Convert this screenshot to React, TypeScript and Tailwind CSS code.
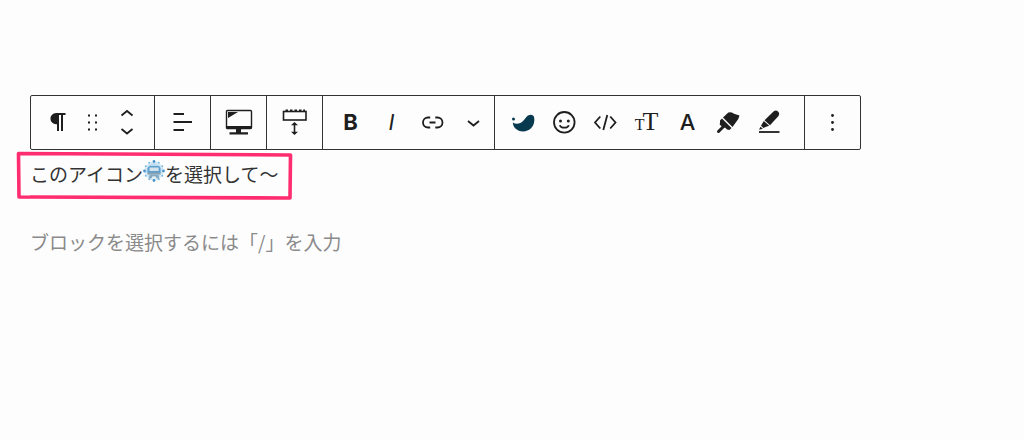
import type { ReactNode } from "react";

function Icon({ children, className = "" }: { children: ReactNode; className?: string }) {
  return (
    <svg
      className={`w-[29px] h-[29px] shrink-0 ${className}`}
      viewBox="0 0 29 29"
      fill="none"
      stroke="currentColor"
      strokeWidth={1.8}
      aria-hidden="true"
    >
      {children}
    </svg>
  );
}

function ToolButton({ label, children }: { label: string; children: ReactNode }) {
  return (
    <button type="button" aria-label={label} className="w-[41px] flex items-center justify-center">
      {children}
    </button>
  );
}

function SingleButton({ label, children }: { label: string; children: ReactNode }) {
  return (
    <button type="button" aria-label={label} className="w-14 last:w-[55px] flex items-center justify-center">
      {children}
    </button>
  );
}

const dots = [7.5, 14.5, 21.5];

// Beads around the emoji, every third one larger
const beads = Array.from({ length: 12 }, (_, i) => {
  const a = (i * Math.PI) / 6;
  return { x: 11 + 9.5 * Math.sin(a), y: 11 - 9.5 * Math.cos(a), big: i % 3 === 0 };
});

function InlineEmoji() {
  return (
    <svg className="w-[22px] h-[22px] inline-block align-baseline" viewBox="0 0 22 22" role="img" aria-label="アイコン">
      <circle cx="11" cy="11" r="8" fill="#bcdcf1" />
      <circle cx="11" cy="11" r="9" fill="none" stroke="#b5d8ef" strokeWidth="0.7" />
      {beads.map((b, i) => (
        <circle key={i} cx={b.x} cy={b.y} r={b.big ? 1.4 : 1} fill={b.big ? "#4a94cc" : "#7db8e0"} />
      ))}
      <path d="M4.5 8l2-2h9.500l1.500 2v5h-13z" fill="#5b9fcf" />
      <path d="M6.500 7.500h9.200v3.500H6.500z" fill="#d5e2e9" />
      <path d="M4.500 12.500h13v2h-13z" fill="#8aa3b2" />
      <path d="M7 14.500h8l1.500 4h-2.800L12.500 16.500h-3L8.300 18.500H5.500z" fill="#86a9bf" />
      <path d="M9.500 16.500h3l1 2.500h-5z" fill="#e3f0f8" />
    </svg>
  );
}

export default function App() {
  return (
    <div className="min-h-screen bg-[#fdfdfd] text-[#1e1e1e] px-[30px] pt-[95px] font-['Noto_Sans_CJK_JP',sans-serif]">
      {/* Block toolbar */}
      <div role="toolbar" aria-label="ブロックツール" className="flex w-fit h-[55px] border border-[#333] rounded-xs divide-x divide-[#333]">
        <div className="flex px-[9px]">
          <button type="button" aria-label="段落" className="w-[35px] flex items-center justify-center">
            <Icon>
              <path d="M13 5a5.6 5.6 0 0 0 0 11.2h1V23h2V7h2v16h2V7h2.5V5z" fill="currentColor" stroke="none" />
            </Icon>
          </button>
          <button type="button" aria-label="ドラッグ" className="w-[35px] flex items-center justify-center">
            <Icon>
              {dots.map((y) => (
                <path key={y} d={`M10 ${y}h2M17 ${y}h2`} strokeWidth={2} />
              ))}
            </Icon>
          </button>
          <div className="w-[35px] flex flex-col items-center justify-center gap-[3px]">
            <button type="button" aria-label="上に移動">
              <svg className="w-[29px] h-[13px] block" viewBox="0 0 29 13" fill="none" stroke="currentColor" strokeWidth={1.8}>
                <path d="M8.5 7.5l5.5-4.5 5.5 4.5" />
              </svg>
            </button>
            <button type="button" aria-label="下に移動">
              <svg className="w-[29px] h-[13px] block" viewBox="0 0 29 13" fill="none" stroke="currentColor" strokeWidth={1.8}>
                <path d="M8.5 5l5.5 4.5 5.5-4.5" />
              </svg>
            </button>
          </div>
        </div>

        <SingleButton label="配置">
          <Icon>
            <path d="M5.5 6H16M5.5 14H24M5.5 22H16" />
          </Icon>
        </SingleButton>

        <SingleButton label="表示デバイス">
          <Icon>
            <rect x="2.5" y="2.5" width="25" height="18" rx="1" strokeWidth={1.4} />
            <path d="M2.5 18h25v2.5h-25zM4 4h10L4 10zM12 21h5v3.3h7v2.2H5.5v-2.2H12z" fill="currentColor" stroke="none" />
          </Icon>
        </SingleButton>

        <SingleButton label="余白">
          <Icon>
            <rect x="3.5" y="3.5" width="22.5" height="8.5" strokeWidth={1.6} />
            <path d="M5.5 2.5H8M10 2.5h2.5M14.5 2.5H17M19 2.5h2.5M23.2 2.5H25" strokeWidth={2} />
            <path d="M14.5 15v11" strokeWidth={1.6} />
            <path d="M14.5 14l3.5 3.200h-7zM14.5 27l3.5-3.200h-7z" fill="currentColor" stroke="none" />
          </Icon>
        </SingleButton>

        <div className="flex pl-[7px]">
          <ToolButton label="太字">
            <span className="pb-0.5 font-[Inter,sans-serif] text-[22px] leading-none font-bold">B</span>
          </ToolButton>
          <ToolButton label="イタリック">
            <span className="pb-0.5 font-[Inter,sans-serif] text-[22px] leading-none italic">I</span>
          </ToolButton>
          <ToolButton label="リンク">
            <Icon>
              <path d="M12.2 9.5H10a5 5 0 0 0 0 10h2.2M17.3 9.5h2.2a5 5 0 0 1 0 10h-2.2M11.5 14.5h6" />
            </Icon>
          </ToolButton>
          <ToolButton label="さらに表示">
            <Icon>
              <path d="M9 13l5.5 4.5 5.5-4.5" />
            </Icon>
          </ToolButton>
        </div>

        <div className="flex pl-2 pr-3.5">
          <ToolButton label="装飾">
            <Icon className="text-[#073a4e]">
              <circle cx="4.5" cy="11" r="1.5" fill="currentColor" stroke="none" />
              <path
                d="M3.8 14.5C7 16.8 11.5 16 14.5 12.500C17 9.500 18.500 6.700 21.800 6.700C24.800 6.700 25.700 9.500 25.300 13C24.700 19 20 23.500 14 23.400C8 23.200 4 19.500 3.800 14.500Z"
                fill="currentColor"
                stroke="none"
              />
            </Icon>
          </ToolButton>
          <ToolButton label="絵文字">
            <Icon>
              <circle cx="14.3" cy="14.3" r="10.3" />
              <circle cx="10.5" cy="13" r="1.500" fill="currentColor" stroke="none" />
              <circle cx="18.3" cy="13" r="1.500" fill="currentColor" stroke="none" />
              <path d="M9.800 17.200c1 3.300 8 3.300 9 0" />
            </Icon>
          </ToolButton>
          <ToolButton label="コード">
            <Icon>
              <path d="M9.300 8.500l-5.300 6 5.300 6M19.200 8.500l5.300 6-5.300 6M16.300 7l-4 15" />
            </Icon>
          </ToolButton>
          <ToolButton label="文字サイズ">
            <span className="flex items-baseline pb-0.5 font-['Liberation_Serif',serif] font-medium">
              <span className="text-[16px] leading-none">T</span>
              <span className="-ml-0.5 text-[26px] leading-none">T</span>
            </span>
          </ToolButton>
          <ToolButton label="文字色">
            <span className="pb-0.5 font-[Inter,sans-serif] text-[22px] leading-none font-medium">A</span>
          </ToolButton>
          <ToolButton label="背景色">
            <Icon>
              <path d="M4.500 23.500l5.500-5.500" strokeWidth={3} strokeLinecap="round" />
              <path
                d="M6 12.500l2-2 9.500 9.500-2 2-2.500-.5-2-2-2 .3-3.300-3.300.3-2zM9 9.500l5.300-5q3.700-1 5.700 1.200l5.500 1.800-1.200 3.500-5.800 8z"
                fill="currentColor"
                stroke="none"
              />
            </Icon>
          </ToolButton>
          <ToolButton label="マーカー">
            <Icon>
              <path d="M4 24h20.500" />
              <path
                d="M18.500 3.500q2.500-1.800 4.500 0t.5 4.500l-8.500 9.200-5.500-5zM8.800 13l5.400 4.800-3.700 1.200-2 1-2.500-2.200zM5.500 18.800l2.300 2-3.800.9z"
                fill="currentColor"
                stroke="none"
              />
            </Icon>
          </ToolButton>
        </div>

        <SingleButton label="オプション">
          <Icon>
            {dots.map((y) => (
              <circle key={y} cx="14.5" cy={y} r="1.4" fill="currentColor" stroke="none" />
            ))}
          </Icon>
        </SingleButton>
      </div>

      {/* Editor content */}
      <div className="text-[19px] leading-7">
        <p className="relative mt-2.5 text-[#333]">
          このアイコン
          <InlineEmoji />
          を選択して〜
          <svg className="absolute -left-3.5 -top-2.5 w-[278px] h-[52px]" viewBox="0 0 278 52" fill="none" aria-hidden="true">
            <path d="M2.5 3.5L274.5 5L274 48L3 47Z" stroke="#ff2d6f" strokeWidth={3.6} strokeLinejoin="round" />
          </svg>
        </p>
        <input
          type="text"
          aria-label="ブロック"
          placeholder="ブロックを選択するには「/」を入力"
          className="block w-full mt-10 h-7 bg-transparent outline-none placeholder:text-[#8a8a8a]"
        />
      </div>
    </div>
  );
}
